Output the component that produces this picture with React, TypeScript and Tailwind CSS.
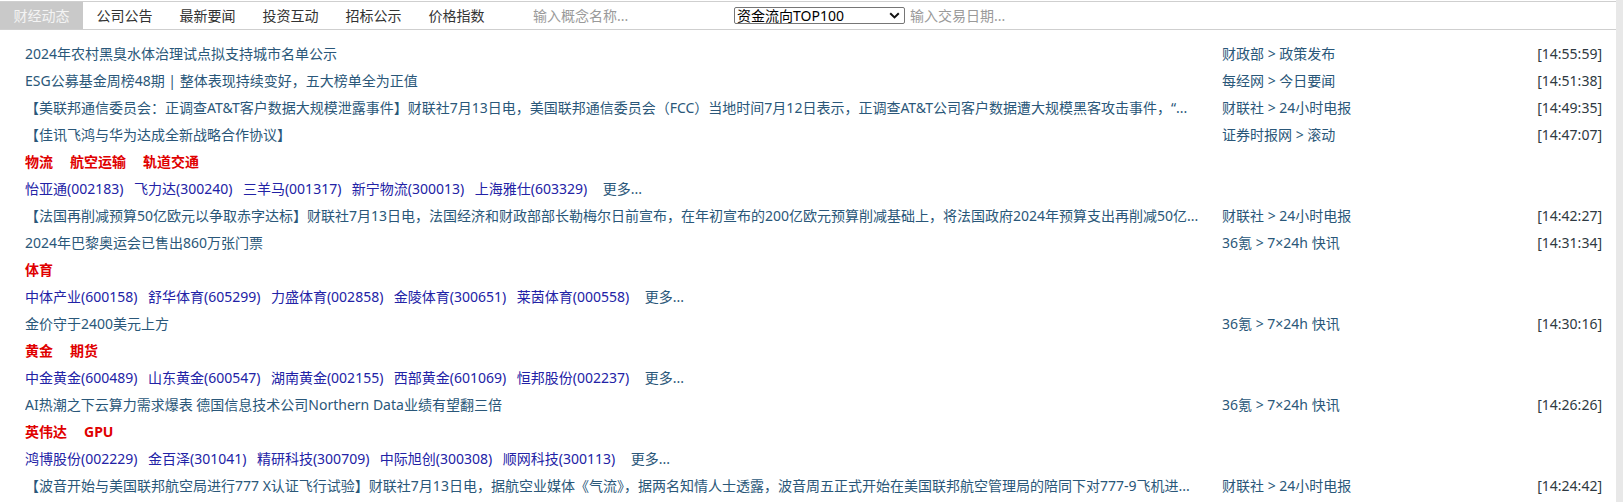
import React from 'react'

type NewsRow = { kind: 'news'; title: string; source: string; time: string }
type TagRow = { kind: 'tags'; tags: string[] }
type StockRow = { kind: 'stocks'; stocks: string[] }
type Row = NewsRow | TagRow | StockRow

const tabs = ['财经动态', '公司公告', '最新要闻', '投资互动', '招标公示', '价格指数']

const rows: Row[] = [
  { kind: 'news', title: '2024年农村黑臭水体治理试点拟支持城市名单公示', source: '财政部 > 政策发布', time: '[14:55:59]' },
  { kind: 'news', title: 'ESG公募基金周榜48期 | 整体表现持续变好，五大榜单全为正值', source: '每经网 > 今日要闻', time: '[14:51:38]' },
  {
    kind: 'news',
    title:
      '【美联邦通信委员会：正调查AT&T客户数据大规模泄露事件】财联社7月13日电，美国联邦通信委员会（FCC）当地时间7月12日表示，正调查AT&T公司客户数据遭大规模黑客攻击事件，“...',
    source: '财联社 > 24小时电报',
    time: '[14:49:35]',
  },
  { kind: 'news', title: '【佳讯飞鸿与华为达成全新战略合作协议】', source: '证券时报网 > 滚动', time: '[14:47:07]' },
  { kind: 'tags', tags: ['物流', '航空运输', '轨道交通'] },
  { kind: 'stocks', stocks: ['怡亚通(002183)', '飞力达(300240)', '三羊马(001317)', '新宁物流(300013)', '上海雅仕(603329)'] },
  {
    kind: 'news',
    title:
      '【法国再削减预算50亿欧元以争取赤字达标】财联社7月13日电，法国经济和财政部部长勒梅尔日前宣布，在年初宣布的200亿欧元预算削减基础上，将法国政府2024年预算支出再削减50亿...',
    source: '财联社 > 24小时电报',
    time: '[14:42:27]',
  },
  { kind: 'news', title: '2024年巴黎奥运会已售出860万张门票', source: '36氪 > 7×24h 快讯', time: '[14:31:34]' },
  { kind: 'tags', tags: ['体育'] },
  { kind: 'stocks', stocks: ['中体产业(600158)', '舒华体育(605299)', '力盛体育(002858)', '金陵体育(300651)', '莱茵体育(000558)'] },
  { kind: 'news', title: '金价守于2400美元上方', source: '36氪 > 7×24h 快讯', time: '[14:30:16]' },
  { kind: 'tags', tags: ['黄金', '期货'] },
  { kind: 'stocks', stocks: ['中金黄金(600489)', '山东黄金(600547)', '湖南黄金(002155)', '西部黄金(601069)', '恒邦股份(002237)'] },
  { kind: 'news', title: 'AI热潮之下云算力需求爆表 德国信息技术公司Northern Data业绩有望翻三倍', source: '36氪 > 7×24h 快讯', time: '[14:26:26]' },
  { kind: 'tags', tags: ['英伟达', 'GPU'] },
  { kind: 'stocks', stocks: ['鸿博股份(002229)', '金百泽(301041)', '精研科技(300709)', '中际旭创(300308)', '顺网科技(300113)'] },
  {
    kind: 'news',
    title:
      '【波音开始与美国联邦航空局进行777 X认证飞行试验】财联社7月13日电，据航空业媒体《气流》，据两名知情人士透露，波音周五正式开始在美国联邦航空管理局的陪同下对777-9飞机进...',
    source: '财联社 > 24小时电报',
    time: '[14:24:42]',
  },
]

function ListRow({ row }: { row: Row }) {
  if (row.kind === 'tags') {
    return (
      <div className="flex h-[27px] items-center gap-[17px] font-bold text-[#e00000]">
        {row.tags.map((t) => (
          <span key={t}>{t}</span>
        ))}
      </div>
    )
  }
  if (row.kind === 'stocks') {
    return (
      <div className="flex h-[27px] items-center">
        {row.stocks.map((s) => (
          <a key={s} className="mr-[10.5px] cursor-pointer text-[#2222a6]">
            {s}
          </a>
        ))}
        <a className="ml-[5px] cursor-pointer text-[#2a5779]">更多...</a>
      </div>
    )
  }
  return (
    <div className="flex h-[27px] items-center">
      <div className="w-[1185px] shrink-0 truncate whitespace-nowrap text-[#2a5779]">{row.title}</div>
      <div className="ml-[12px] flex-1 whitespace-nowrap text-[#2a5779]">{row.source}</div>
      <div className="shrink-0 whitespace-nowrap text-right text-[#2f3a42]">{row.time}</div>
    </div>
  )
}

export default function App() {
  return (
    <div
      className="flex h-[502px] w-full overflow-hidden bg-white text-[14px] leading-[27px]"
      style={{ fontFamily: '"Noto Sans", "Noto Sans CJK SC", sans-serif' }}
    >
      <div className="flex min-w-0 flex-1 flex-col pt-[1px]">
        <div className="flex h-[29px] items-stretch border-y border-[#cfcfcf]">
          {tabs.map((t, i) => (
            <div
              key={t}
              className={
                i === 0
                  ? 'flex w-[83px] items-center justify-center bg-[#c9c9c9] text-[#f4f4f4]'
                  : 'flex w-[83px] items-center justify-center text-[#333333]'
              }
            >
              {t}
            </div>
          ))}
          <input
            className="ml-[22px] w-[200px] bg-transparent pl-[13px] text-[14px] text-[#333] outline-none placeholder:text-[#9a9a9a]"
            placeholder="输入概念名称..."
          />
          <div className="ml-[14px] flex items-center">
            <div className="flex h-[17px] w-[171px] cursor-default items-center justify-between overflow-hidden rounded-[2px] border border-[#767676] bg-white pl-[2px] pr-[4px] text-[14px] leading-[15px] text-black">
              <span>资金流向TOP100</span>
              <svg width="11" height="7" viewBox="0 0 11 7" fill="none">
                <path d="M1.2 1.2 L5.5 5.4 L9.8 1.2" stroke="#111" strokeWidth="2" />
              </svg>
            </div>
          </div>
          <input
            className="w-[200px] bg-transparent pl-[5px] text-[14px] text-[#333] outline-none placeholder:text-[#9a9a9a]"
            placeholder="输入交易日期..."
          />
        </div>
        <div className="flex flex-col pt-[10px] pl-[25px] pr-[14px]">
          {rows.map((r, i) => (
            <ListRow key={i} row={r} />
          ))}
        </div>
      </div>
      <div className="w-[7px] shrink-0 bg-[#e8e8e8]" />
    </div>
  )
}
